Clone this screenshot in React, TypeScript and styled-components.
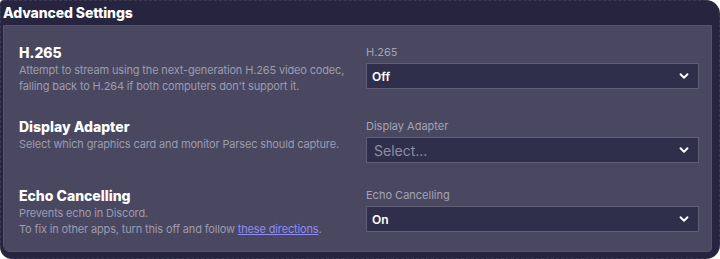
import { createGlobalStyle } from "styled-components";
import styled from "styled-components";
import { ChevronDown } from "lucide-react";

const GlobalStyle = createGlobalStyle`
  html, body {
    margin: 0;
    padding: 0;
    background: #ffffff;
  }
  body {
    font-family: Inter, "Noto Sans", sans-serif;
  }
`;

const Frame = styled.section`
  box-sizing: border-box;
  width: 720px;
  height: 259px;
  background: #26243e;
  border: 1px dashed #3b3953;
  border-radius: 4px 14px 14px 12px;
  display: flex;
  flex-direction: column;
  overflow: hidden;
`;

const Header = styled.header`
  flex-shrink: 0;
  height: 24px;
  display: flex;
  align-items: center;
  padding-left: 2px;
  padding-bottom: 2px;
  box-sizing: border-box;
  color: #ffffff;
  font-size: 14px;
  font-weight: 800;
  letter-spacing: -0.1px;
`;

const Body = styled.div`
  box-sizing: border-box;
  margin: 0 7px 6px 2px;
  flex: 1;
  background: #494860;
  border: 1px solid #54536a;
  border-radius: 0 0 4px 7px;
  padding: 18px 12px 12px 15px;
  display: flex;
  flex-direction: column;
  gap: 24px;
`;

const Row = styled.div`
  display: grid;
  grid-template-columns: 1fr 333px;
  column-gap: 12px;
  align-items: start;
`;

const Info = styled.div`
  display: flex;
  flex-direction: column;
`;

const Title = styled.h3`
  margin: 0;
  font-size: 14px;
  line-height: 18px;
  font-weight: 800;
  color: #ffffff;
`;

const Desc = styled.p`
  margin: 0;
  font-size: 11px;
  line-height: 16px;
  letter-spacing: -0.15px;
  white-space: nowrap;
  color: #9c9bb0;
`;

const Link = styled.a`
  color: #8e8cf5;
  text-decoration: underline;
`;

const Field = styled.div`
  display: flex;
  flex-direction: column;
  gap: 3px;
`;

const Label = styled.label`
  font-size: 11px;
  line-height: 16px;
  color: #a4a3b6;
`;

const Select = styled.div<{ $placeholder?: boolean }>`
  box-sizing: border-box;
  height: 26px;
  display: flex;
  align-items: center;
  justify-content: space-between;
  padding: 0 7px 0 ${(p) => (p.$placeholder ? "7px" : "5px")};
  background: #302f4b;
  border: 1px solid #5f5e75;
  color: ${(p) => (p.$placeholder ? "#8e8da4" : "#ffffff")};
  font-size: ${(p) => (p.$placeholder ? "14px" : "12px")};
  font-weight: ${(p) => (p.$placeholder ? 400 : 600)};
`;

function Dropdown({ value, placeholder }: { value: string; placeholder?: boolean }) {
  return (
    <Select $placeholder={placeholder}>
      <span>{value}</span>
      <ChevronDown size={14} strokeWidth={3.2} color="#ffffff" />
    </Select>
  );
}

export default function App() {
  return (
    <>
      <GlobalStyle />
      <Frame>
        <Header>Advanced Settings</Header>
        <Body>
          <Row>
            <Info>
              <Title>H.265</Title>
              <Desc>
                Attempt to stream using the next-generation H.265 video codec,
                <br />
                falling back to H.264 if both computers don't support it.
              </Desc>
            </Info>
            <Field>
              <Label>H.265</Label>
              <Dropdown value="Off" />
            </Field>
          </Row>
          <Row>
            <Info>
              <Title>Display Adapter</Title>
              <Desc>Select which graphics card and monitor Parsec should capture.</Desc>
            </Info>
            <Field>
              <Label>Display Adapter</Label>
              <Dropdown value="Select..." placeholder />
            </Field>
          </Row>
          <Row>
            <Info>
              <Title>Echo Cancelling</Title>
              <Desc>
                Prevents echo in Discord.
                <br />
                To fix in other apps, turn this off and follow <Link href="#">these directions</Link>.
              </Desc>
            </Info>
            <Field>
              <Label>Echo Cancelling</Label>
              <Dropdown value="On" />
            </Field>
          </Row>
        </Body>
      </Frame>
    </>
  );
}
